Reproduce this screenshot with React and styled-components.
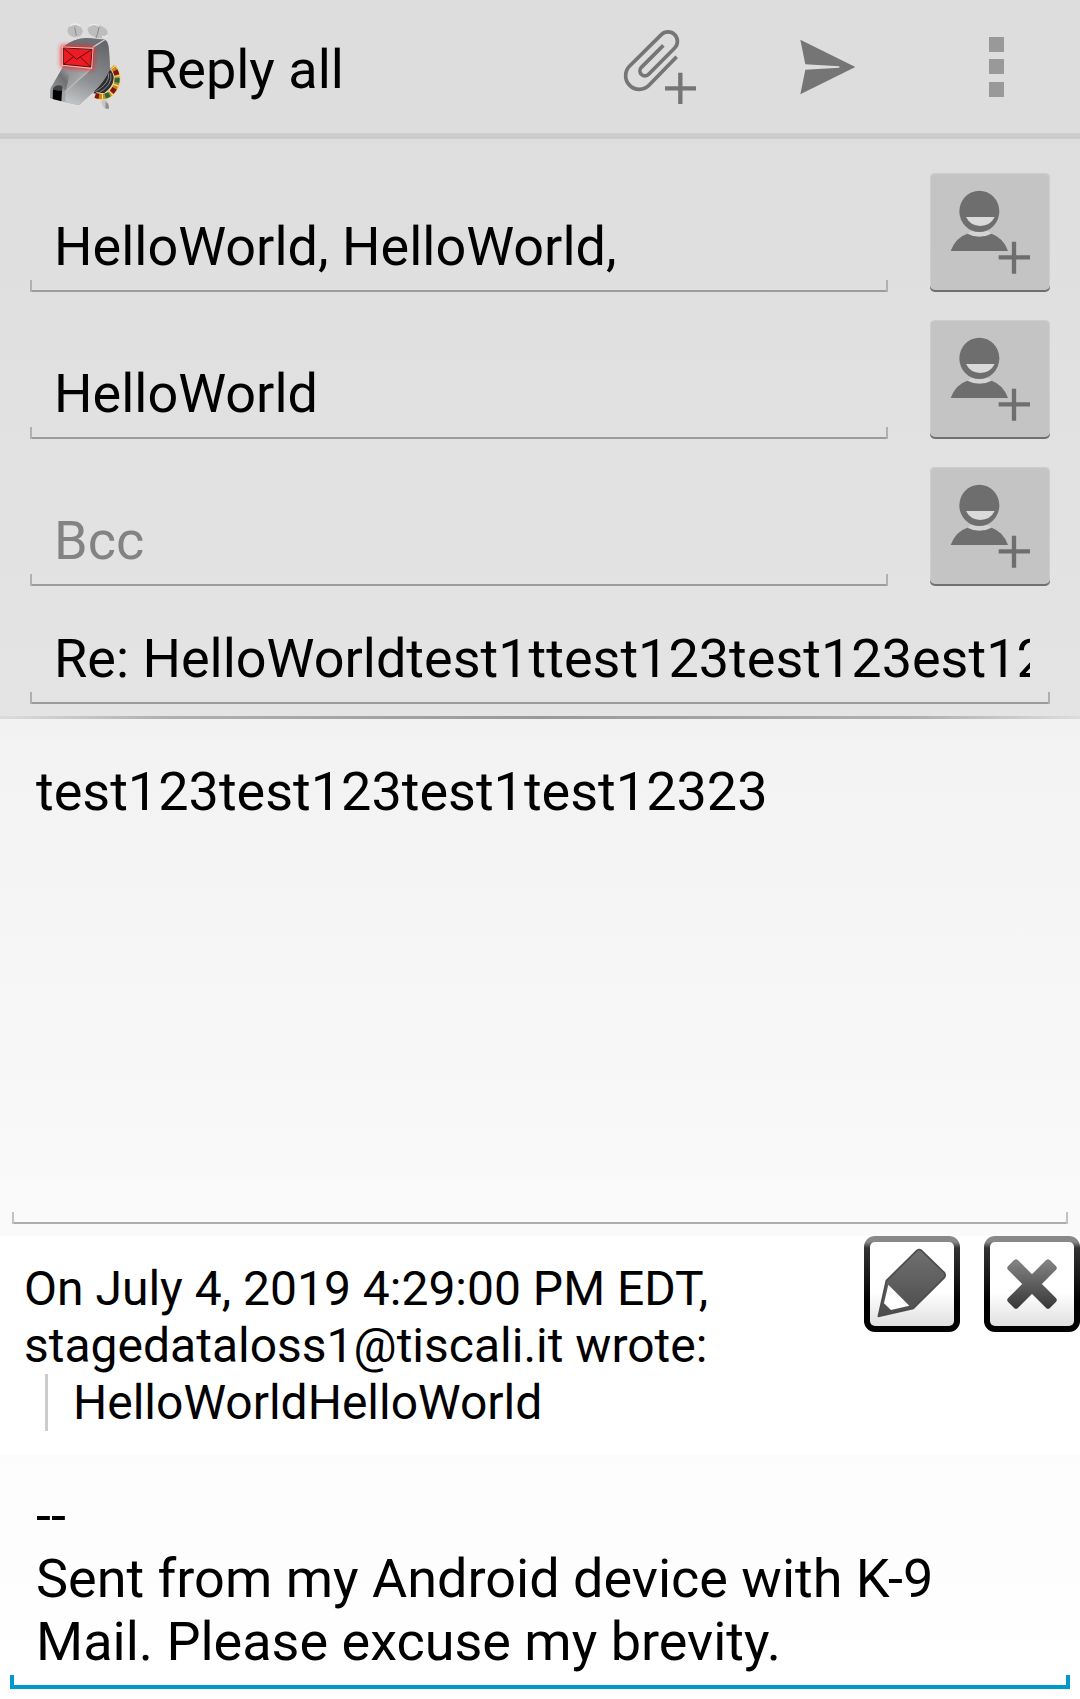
import React from "react";
import styled, { createGlobalStyle, css } from "styled-components";

const GlobalStyle = createGlobalStyle`
  *, *::before, *::after { box-sizing: border-box; }
  body {
    margin: 0;
    background: #fefefe;
    color: #000;
    font-family: Roboto, "Liberation Sans", sans-serif;
  }
  button, input, textarea {
    margin: 0;
    border: 0;
    border-radius: 0;
    outline: 0;
    color: inherit;
    font-family: inherit;
  }
`;

const Toolbar = styled.header`
  display: flex;
  align-items: center;
  height: 139px;
  padding: 0 0 1px 36px;
  border-bottom: 6px solid #ccc;
  background: #ddd;
`;

const Title = styled.h1`
  flex: 1;
  margin: 0;
  padding: 7px 0 0 12px;
  font-size: 54px;
  font-weight: 400;
  line-height: 63px;
  white-space: nowrap;
`;

const ActionButton = styled.button`
  display: flex;
  justify-content: center;
  width: 168px;
  padding: 0;
  background: none;
`;

const Envelope = styled.section`
  display: flex;
  flex-direction: column;
  padding: 34px 30px 12px;
  background: linear-gradient(#dedede, #e4e4e4);
`;

const Recipients = styled.div`
  display: flex;
  flex-direction: column;
  gap: 28px;
  margin-bottom: 22px;
`;

const RecipientRow = styled.div`
  display: flex;
  align-items: flex-end;
  gap: 42px;
`;

const holo = css`
  --line: ${(p) => (p.$active ? "#0099cc" : p.$lineColor || "#9c9c9c")};
  --tick: ${(p) => (p.$active ? "#0099cc" : p.$tickColor || "#b0b0b0")};
  --w: ${(p) => (p.$active ? "4px" : "2px")};
  --h: ${(p) => (p.$active ? "14px" : "12px")};
  background:
    linear-gradient(var(--tick), var(--tick)) left bottom / var(--w) var(--h) no-repeat,
    linear-gradient(var(--tick), var(--tick)) right bottom / var(--w) var(--h) no-repeat,
    linear-gradient(var(--line), var(--line)) left bottom / 100% var(--w) no-repeat;
  font-size: 54px;
  line-height: 63px;
`;

const Field = styled.input`
  ${holo}
  flex: 1;
  min-width: 0;
  height: 96px;
  padding: 19px 20px 14px 24px;
  &::placeholder { color: #838383; opacity: 1; }
`;

const AddContact = styled.button`
  display: flex;
  width: 120px;
  height: 119px;
  padding: 0;
  border-radius: 5px;
  background: #c4c4c4;
  box-shadow: inset 0 -2px 0 #707070, inset 0 0 1px 1px #cfcfcf;
`;

const Divider = styled.hr`
  height: 3px;
  margin: 0;
  border: 0;
  background: linear-gradient(90deg, #dcdcdc, #b0b0b0 15%, #999 50%, #b0b0b0 85%, #dcdcdc);
`;

const MessageArea = styled.section`
  display: flex;
  padding: 12px;
  background: linear-gradient(#f2f2f2, #fafafa);
`;

const MessageField = styled.textarea`
  ${holo}
  flex: 1;
  min-width: 0;
  min-height: 493px;
  padding: 29px 24px 14px;
  resize: none;
`;

const QuoteArea = styled.section`
  display: flex;
  align-items: flex-start;
  background: #fff;
`;

const QuoteText = styled.div`
  flex: 1;
  padding: 24px;
  font-size: 48px;
  line-height: 57px;
`;

const Quoted = styled.blockquote`
  margin: 0 0 0 21px;
  padding-left: 25px;
  border-left: 3px solid #ccc;
`;

const QuoteActions = styled.div`
  display: flex;
  gap: 24px;
`;

const QuoteButton = styled.button`
  display: flex;
  width: 96px;
  height: 96px;
  padding: 0;
  border: 6px solid transparent;
  border-radius: 11px;
  background:
    linear-gradient(#fff 60%, #e0e0e0) padding-box,
    linear-gradient(#888 6px, #333 12px, #000 70%) border-box;
`;

const SignatureArea = styled.section`
  display: flex;
  padding: 0 10px 10px;
  background: linear-gradient(#fcfcfc, #fff);
`;

const SignatureField = styled.textarea`
  ${holo}
  flex: 1;
  min-width: 0;
  height: 234px;
  padding: 29px 26px 16px;
  overflow: hidden;
  resize: none;
`;

const collar = "M247 170 C268 192 266 226 243 249 C230 261 212 262 196 256";

function DogLogo() {
  return (
    <svg width="96" height="96" viewBox="18 24 288 288" aria-hidden="true">
      <defs>
        <linearGradient id="fur" x1="0" y1="0" x2="1" y2="1">
          <stop offset="0" stopColor="#777" />
          <stop offset="0.35" stopColor="#8d8e90" />
          <stop offset="0.6" stopColor="#a9aaac" />
          <stop offset="1" stopColor="#6e6f72" />
        </linearGradient>
        <linearGradient id="jaw" x1="0.6" y1="0" x2="0.3" y2="1">
          <stop offset="0" stopColor="#66676a" />
          <stop offset="0.6" stopColor="#8f9093" />
          <stop offset="1" stopColor="#c0c1c3" />
        </linearGradient>
        <linearGradient id="snout" x1="0" y1="1" x2="1" y2="0">
          <stop offset="0" stopColor="#999" />
          <stop offset="0.6" stopColor="#6f7073" />
          <stop offset="1" stopColor="#aaa" />
        </linearGradient>
        <filter id="glow" x="-40%" y="-40%" width="180%" height="180%">
          <feGaussianBlur stdDeviation="7" />
        </filter>
      </defs>
      <path d="M224 268 Q240 275 236 297 Q224 300 217 286 L214 272Z" fill="#c6c6c8" />
      <path d="M227 275 Q239 284 236 297 L226 295Z" fill="#8e8e90" />
      <path d="M236 172 L250 178 Q262 226 216 254 L190 250Z" fill="#2e2e30" />
      <path d="M242 190 Q250 226 204 250 M236 190 Q240 220 196 245" stroke="#858688" strokeWidth="3" fill="none" />
      <path d={collar} stroke="#f6cf86" strokeWidth="21" fill="none" />
      <path d={collar} stroke="#c48a14" strokeWidth="15" fill="none" />
      <path d={collar} stroke="#7d1517" strokeWidth="15" strokeDasharray="14 42" strokeDashoffset="-14" fill="none" />
      <path d={collar} stroke="#1d6848" strokeWidth="15" strokeDasharray="13 43" strokeDashoffset="-38" fill="none" />
      <path d={collar} stroke="#f6dfb0" strokeWidth="16" strokeDasharray="3 25" strokeDashoffset="-30" fill="none" />
      <ellipse cx="135" cy="63" rx="23" ry="19" fill="#bdbdbd" transform="rotate(10 135 63)" />
      <ellipse cx="203" cy="64" rx="31" ry="19" fill="#bdbdbd" transform="rotate(14 203 64)" />
      <path d="M120 48 Q136 36 151 48 M178 48 Q190 38 207 48 M216 79 Q228 84 232 74" stroke="#ececec" strokeWidth="4" fill="none" />
      <path d="M134 52 Q138 75 143 94 M207 52 Q204 75 192 96" stroke="#888" strokeWidth="3" fill="none" />
      <path d="M139 78 L144 96 M198 84 L190 98" stroke="#ddd" strokeWidth="5" />
      <path d="M99 112 Q126 86 170 84 L222 88 Q232 90 235 106 Q241 135 240 178 Q220 220 190 246 L147 285 L106 277 L60 265 L61 238 L98 176Z" fill="url(#fur)" />
      <path d="M99 112 Q126 86 170 84 L226 89 L188 112Z" fill="#6f7073" />
      <path d="M188 112 L226 89" stroke="#d2d2d3" strokeWidth="4" />
      <path d="M183 175 L190 114 L226 90 Q234 96 236 112 L240 178 Q220 220 190 246 L147 285 L106 277 L107 243Z" fill="url(#jaw)" />
      <path d="M98 172 L120 188 L107 243 L90 228 L61 236Z" fill="url(#snout)" />
      <path d="M106 245 L181 178" stroke="#bbb" strokeWidth="4" />
      <path d="M69 234 Q80 220 97 229 L97 244 L69 239Z" fill="#414244" />
      <path d="M69 239 L96 243 L94 274 L68 267Z" fill="#000" />
      <path d="M98 112 L188 116 L184 174 L98 165Z" fill="#ff2028" stroke="#ff2028" strokeWidth="12" filter="url(#glow)" opacity="0.85" />
      <path d="M98 112 L188 116 L184 174 L98 165Z" fill="#ed1c24" stroke="#ffb5b0" strokeWidth="5" />
      <path d="M100 114 L186 118 L182 171 L100 163Z M100 114 L140 148 L186 118 M100 163 L130 141 M182 171 L152 142" fill="none" stroke="#5b1014" strokeWidth="3" />
    </svg>
  );
}

function AttachIcon() {
  return (
    <svg width="96" height="96" viewBox="36 24 288 288" aria-hidden="true">
      <g fill="none" stroke="#757575">
        <path strokeWidth="11" d="M230 140 L147 226 A41 41 0 0 1 89 168 L184 74 A28 28 0 0 1 224 114 L146 193 A15 15 0 0 1 124 172 L190 106" />
        <path strokeWidth="13" d="M195 235 H288 M241 188 V282" />
      </g>
    </svg>
  );
}

function SendIcon() {
  return (
    <svg width="96" height="96" viewBox="540 24 288 288" aria-hidden="true">
      <path fill="#757575" d="M601 89 L766 171 L601 253 L616 179 L718 173 V169 L616 163Z" />
    </svg>
  );
}

function OverflowIcon() {
  return (
    <svg width="96" height="96" viewBox="1044 24 288 288" fill="#999" aria-hidden="true">
      <rect x="1167" y="81" width="45" height="45" />
      <rect x="1167" y="147" width="45" height="45" />
      <rect x="1167" y="216" width="45" height="45" />
    </svg>
  );
}

function AddPersonIcon() {
  return (
    <svg width="120" height="119" viewBox="60 39 360 357" aria-hidden="true">
      <path d="M174 221 Q208 240 243 221 L236 214 H181Z" fill="#d4d4d4" />
      <ellipse cx="208" cy="154" rx="60" ry="62" fill="#6e6e6e" />
      <path d="M168 171 H254 A48 48 0 0 1 168 171Z" fill="#dadada" />
      <path d="M122 273 Q137 232 172 221 Q208 240 245 221 Q281 234 294 273Z" fill="#6e6e6e" />
      <path d="M266 292 H360 M312 245 V341" stroke="#6e6e6e" strokeWidth="13" />
    </svg>
  );
}

function PencilIcon() {
  return (
    <svg width="84" height="84" viewBox="90 156 252 252" aria-hidden="true">
      <defs>
        <linearGradient id="pencil" x1="0" y1="0" x2="0" y2="1">
          <stop offset="0" stopColor="#707070" />
          <stop offset="1" stopColor="#4c4c4c" />
        </linearGradient>
      </defs>
      <path fill="url(#pencil)" stroke="#4c4c4c" strokeWidth="5" strokeLinejoin="round" d="M231 181 Q238 176 244 181 L313 248 Q318 256 313 263 L220 355 L115 379 L139 272Z" />
      <path fill="#fff" d="M145 284 L208 347 L153 360 L132 340Z" />
    </svg>
  );
}

function CloseIcon() {
  return (
    <svg width="84" height="84" viewBox="450 156 252 252" aria-hidden="true">
      <defs>
        <linearGradient id="cross" gradientUnits="userSpaceOnUse" x1="0" y1="208" x2="0" y2="355">
          <stop offset="0" stopColor="#858585" />
          <stop offset="1" stopColor="#383838" />
        </linearGradient>
      </defs>
      <path
        fill="url(#cross)"
        stroke="url(#cross)"
        strokeWidth="16"
        strokeLinejoin="round"
        d="M576 264 L624 216 L642 234 L594 282 L642 330 L624 348 L576 300 L528 348 L510 330 L558 282 L510 234 L528 216Z"
      />
    </svg>
  );
}

const recipients = [
  { label: "To", value: "HelloWorld, HelloWorld," },
  { label: "Cc", value: "HelloWorld" },
  { label: "Bcc", value: "" },
];

export default function App() {
  return (
    <>
      <GlobalStyle />
      <Toolbar>
        <DogLogo />
        <Title>Reply all</Title>
        <ActionButton aria-label="Add attachment"><AttachIcon /></ActionButton>
        <ActionButton aria-label="Send"><SendIcon /></ActionButton>
        <ActionButton aria-label="More options"><OverflowIcon /></ActionButton>
      </Toolbar>
      <main>
        <Envelope>
          <Recipients>
            {recipients.map((r) => (
              <RecipientRow key={r.label}>
                <Field aria-label={r.label} placeholder={r.label} defaultValue={r.value} />
                <AddContact aria-label={`Add ${r.label} contact`}><AddPersonIcon /></AddContact>
              </RecipientRow>
            ))}
          </Recipients>
          <Field aria-label="Subject" defaultValue="Re: HelloWorldtest1ttest123test123est123" />
        </Envelope>
        <Divider />
        <MessageArea>
          <MessageField
            $lineColor="#adadad"
            $tickColor="#c2c2c2"
            aria-label="Message text"
            spellCheck={false}
            defaultValue="test123test123test1test12323"
          />
        </MessageArea>
        <QuoteArea>
          <QuoteText>
            On July 4, 2019 4:29:00 PM EDT, stagedataloss1@tiscali.it wrote:
            <Quoted>HelloWorldHelloWorld</Quoted>
          </QuoteText>
          <QuoteActions>
            <QuoteButton aria-label="Edit quoted text"><PencilIcon /></QuoteButton>
            <QuoteButton aria-label="Remove quoted text"><CloseIcon /></QuoteButton>
          </QuoteActions>
        </QuoteArea>
        <SignatureArea>
          <SignatureField
            $active
            aria-label="Signature"
            spellCheck={false}
            defaultValue={"--\nSent from my Android device with K-9 Mail. Please excuse my brevity."}
          />
        </SignatureArea>
      </main>
    </>
  );
}
